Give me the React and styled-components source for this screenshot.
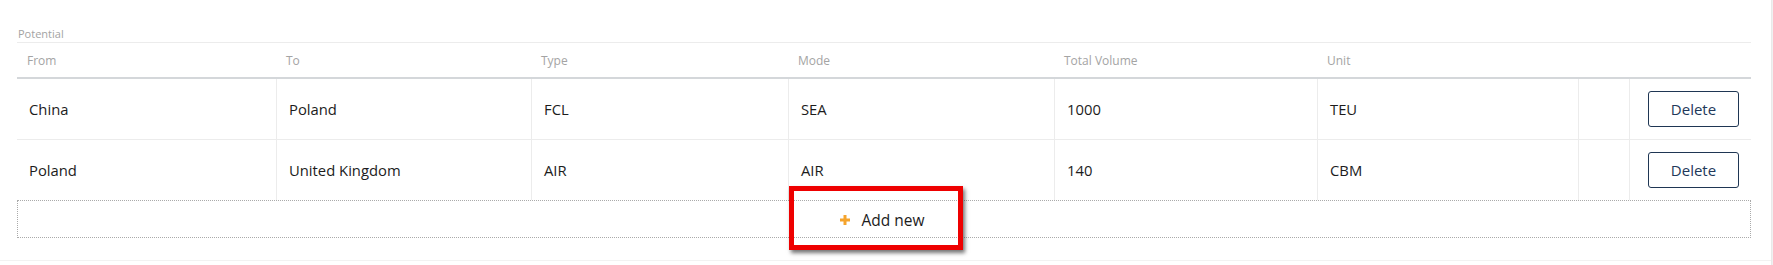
import React from "react";
import styled, { createGlobalStyle } from "styled-components";

const Global = createGlobalStyle`
  html, body { margin: 0; padding: 0; background: #fff; }
  body { font-family: "Open Sans", "Noto Sans", Arial, sans-serif; color: #1c1c1c; }
`;

const Page = styled.div`
  display: flex;
  width: 1773px;
  height: 265px;
  overflow: hidden;
`;

const Main = styled.div`
  flex: 1;
  display: flex;
  flex-direction: column;
`;

const Panel = styled.section`
  padding: 26px 20px 22px 17px;
  border-bottom: 1px solid #f2f2f2;
`;

const Scrollbar = styled.div`
  width: 7px;
  background: #f0f0f0;
  border-left: 1px solid #e9e9e9;
`;

const SectionLabel = styled.div`
  font-size: 11px;
  line-height: 16px;
  color: #a3a3a3;
  border-bottom: 1px solid #ececec;
  padding-left: 1px;
`;

const Grid = styled.div`
  display: grid;
  grid-template-columns: 259px 255px 257px 266px 263px 261px 51px 1fr;
`;

const HeadCell = styled.div`
  height: 34px;
  display: flex;
  align-items: center;
  padding: 0 10px;
  font-size: 12px;
  color: #a4a4a4;
  border-bottom: 2px solid #d4d7da;
`;

const Cell = styled.div`
  height: 60px;
  display: flex;
  align-items: center;
  padding: 0 12px;
  font-size: 14.8px;
  color: #1c1c1c;
  border-left: ${(p) => (p.$first ? "none" : "1px solid #ececec")};
  border-bottom: ${(p) => (p.$last ? "none" : "1px solid #ececec")};
`;

const DeleteButton = styled.button`
  width: 91px;
  height: 36px;
  margin-left: 6px;
  border: 1px solid #1f3653;
  border-radius: 3px;
  background: #fff;
  color: #22385a;
  font-family: inherit;
  font-size: 15px;
  cursor: pointer;
`;

const AddRow = styled.div`
  height: 36px;
  border: 1px dotted #aaaaaa;
  display: flex;
  align-items: center;
  justify-content: center;
`;

const AddButton = styled.button`
  position: relative;
  display: inline-flex;
  align-items: center;
  gap: 10px;
  background: none;
  border: none;
  padding: 0;
  margin-top: 2px;
  margin-right: 4px;
  font-family: inherit;
  font-size: 15.5px;
  color: #1c1c1c;
  cursor: pointer;
  &::after {
    content: "";
    position: absolute;
    left: -50px;
    right: -38px;
    top: -23px;
    bottom: -19px;
    border: 5px solid #ee0000;
    box-shadow: 2px 3px 4px rgba(0, 0, 0, 0.55);
    pointer-events: none;
  }
`;

const Plus = styled.svg`
  width: 12px;
  height: 12px;
`;

const columns = ["From", "To", "Type", "Mode", "Total Volume", "Unit", "", ""];
const rows = [
  ["China", "Poland", "FCL", "SEA", "1000", "TEU"],
  ["Poland", "United Kingdom", "AIR", "AIR", "140", "CBM"],
];

export default function App() {
  return (
    <Page>
      <Global />
      <Main>
        <Panel>
          <SectionLabel>Potential</SectionLabel>
          <Grid>
            {columns.map((c, i) => (
              <HeadCell key={i}>{c}</HeadCell>
            ))}
            {rows.map((r, ri) => {
              const last = ri === rows.length - 1;
              return (
                <React.Fragment key={ri}>
                  {r.map((v, ci) => (
                    <Cell key={ci} $first={ci === 0} $last={last}>
                      {v}
                    </Cell>
                  ))}
                  <Cell $last={last} />
                  <Cell $last={last}>
                    <DeleteButton>Delete</DeleteButton>
                  </Cell>
                </React.Fragment>
              );
            })}
          </Grid>
          <AddRow>
            <AddButton>
              <Plus viewBox="0 0 12 12">
                <path d="M6 1v10M1 6h10" stroke="#f5a42c" strokeWidth="3" />
              </Plus>
              Add new
            </AddButton>
          </AddRow>
        </Panel>
      </Main>
      <Scrollbar />
    </Page>
  );
}
